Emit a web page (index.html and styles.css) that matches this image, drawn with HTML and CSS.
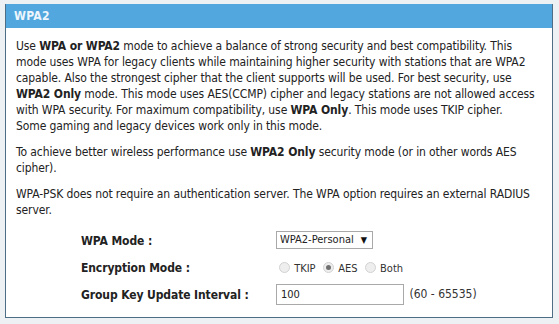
FILE: index.html
```html
<!DOCTYPE html>
<html lang="en">
<head>
    <meta charset="UTF-8">
    <title>WPA2</title>
    <link rel="stylesheet" href="styles.css">
</head>
<body>
    <div class="box">
        <div class="box-title">WPA2</div>
        <div class="box-body">
            <p>Use <b>WPA or WPA2</b> mode to achieve a balance of strong security and best compatibility. This<br>
            mode uses WPA for legacy clients while maintaining higher security with stations that are WPA2<br>
            capable. Also the strongest cipher that the client supports will be used. For best security, use<br>
            <b>WPA2 Only</b> mode. This mode uses AES(CCMP) cipher and legacy stations are not allowed access<br>
            with WPA security. For maximum compatibility, use <b>WPA Only</b>. This mode uses TKIP cipher.<br>
            Some gaming and legacy devices work only in this mode.</p>
            <p>To achieve better wireless performance use <b>WPA2 Only</b> security mode (or in other words AES<br>
            cipher).</p>
            <p>WPA-PSK does not require an authentication server. The WPA option requires an external RADIUS<br>
            server.</p>

            <table class="form">
                <tr>
                    <td class="label">WPA Mode :</td>
                    <td>
                        <span class="select-wrap">
                            <select class="select">
                                <option>WPA2-Personal</option>
                            </select>
                        </span>
                    </td>
                </tr>
                <tr>
                    <td class="label">Encryption Mode :</td>
                    <td>
                        <label class="radio"><input type="radio" name="enc" disabled> TKIP</label>
                        <label class="radio"><input type="radio" name="enc" checked> AES</label>
                        <label class="radio"><input type="radio" name="enc" disabled> Both</label>
                    </td>
                </tr>
                <tr>
                    <td class="label">Group Key Update Interval :</td>
                    <td>
                        <input type="text" class="text-input" value="100">
                        <span class="hint">(60 - 65535)</span>
                    </td>
                </tr>
            </table>
        </div>
    </div>
</body>
</html>
```

FILE: styles.css
```css
body {
    margin: 0;
    padding: 4px 6px 0 5px;
    background-color: #eef1f3;
    font-family: Tahoma, "DejaVu Sans Condensed", "Liberation Sans", sans-serif;
    font-size: 12px;
    color: #222222;
}
.box {
    border: 1px solid #4d6e84;
    border-top: none;
    background-color: #ffffff;
    height: 314px;
    box-sizing: border-box;
    overflow: hidden;
}
.box-title {
    background-color: #52a8de;
    color: #edf6fc;
    font-weight: bold;
    font-size: 12px;
    height: 24px;
    line-height: 24px;
    padding-left: 9px;
    margin: 0 -1px;
    letter-spacing: 0.3px;
}
.box-body {
    padding: 10px 4px 0 10px;
}
.box-body p {
    margin: 0 0 10px 0;
    line-height: 16px;
    white-space: nowrap;
    letter-spacing: -0.1px;
}
.form {
    border-collapse: collapse;
    margin-top: -1px;
}
.form td {
    height: 27px;
    padding: 0;
    vertical-align: middle;
}
.form .label {
    font-weight: bold;
    font-size: 12px;
    letter-spacing: -0.1px;
    width: 195px;
    padding-left: 65px;
}
.select-wrap {
    position: relative;
    display: inline-block;
}
.select-wrap::after {
    content: "\25BC";
    position: absolute;
    right: 6px;
    top: 3px;
    font-size: 9px;
    color: #111111;
    pointer-events: none;
}
.select {
    appearance: none;
    -webkit-appearance: none;
    font-family: inherit;
    font-size: 11px;
    color: #222222;
    border: 1px solid #a9a9a9;
    border-radius: 0;
    background: #ffffff;
    height: 18px;
    width: 97px;
    padding: 0 0 0 3px;
    margin-top: -6px;
}
.radio {
    font-size: 11px;
    color: #333333;
    margin-right: 1px;
}
.radio input {
    appearance: none;
    -webkit-appearance: none;
    width: 11px;
    height: 11px;
    border: 1px solid #d2d2d2;
    border-radius: 50%;
    background: #eeeeee;
    margin: 0 1px 0 3px;
    vertical-align: -1px;
    position: relative;
}
.radio input:checked::after {
    content: "";
    position: absolute;
    left: 2px;
    top: 2px;
    width: 5px;
    height: 5px;
    border-radius: 50%;
    background: #707070;
}
.text-input {
    font-family: inherit;
    font-size: 11px;
    color: #222222;
    border: 1px solid #a9a9a9;
    width: 128px;
    height: 21px;
    padding: 0 0 0 4px;
    box-sizing: border-box;
    margin: 0 2px 0 0;
}
.hint {
    font-size: 12px;
    color: #333333;
}
```
